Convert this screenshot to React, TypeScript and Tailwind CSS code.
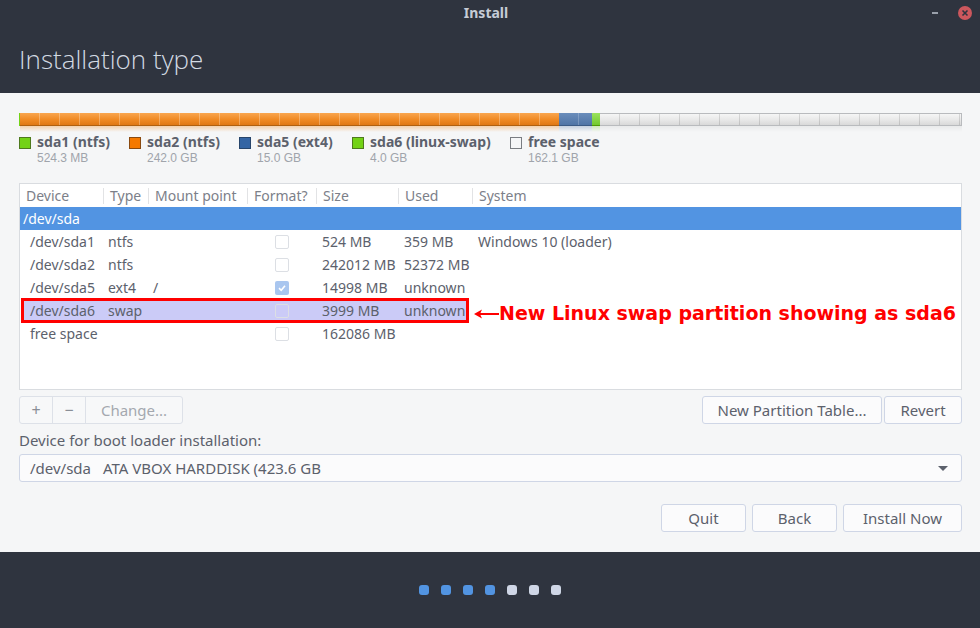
import React from "react";

type Part = {
  dev: string;
  type: string;
  mount: string;
  checked: boolean;
  size: string;
  used: string;
  sys: string;
  mark?: boolean;
};

const parts: Part[] = [
  { dev: "/dev/sda1", type: "ntfs", mount: "", checked: false, size: "524 MB", used: "359 MB", sys: "Windows 10 (loader)" },
  { dev: "/dev/sda2", type: "ntfs", mount: "", checked: false, size: "242012 MB", used: "52372 MB", sys: "" },
  { dev: "/dev/sda5", type: "ext4", mount: "/", checked: true, size: "14998 MB", used: "unknown", sys: "" },
  { dev: "/dev/sda6", type: "swap", mount: "", checked: false, size: "3999 MB", used: "unknown", sys: "", mark: true },
  { dev: "free space", type: "", mount: "", checked: false, size: "162086 MB", used: "", sys: "" },
];

const legend = [
  { label: "sda1 (ntfs)", size: "524.3 MB", box: "bg-[#73d216] border-[#4e7a1e]", w: "w-[110px]" },
  { label: "sda2 (ntfs)", size: "242.0 GB", box: "bg-[#f57900] border-[#8a4a10]", w: "w-[110px]" },
  { label: "sda5 (ext4)", size: "15.0 GB", box: "bg-[#3465a4] border-[#27456b]", w: "w-[113px]" },
  { label: "sda6 (linux-swap)", size: "4.0 GB", box: "bg-[#73d216] border-[#4e7a1e]", w: "w-[158px]" },
  { label: "free space", size: "162.1 GB", box: "bg-[#f5f6f7] border-[#7a7d82]", w: "" },
];

const headers = ["Device", "Type", "Mount point", "Format?", "Size", "Used", "System"];
const cols = "grid grid-cols-[83px_45px_99px_69px_82px_74px_1fr]";

function Check({ on }: { on: boolean }) {
  if (on)
    return (
      <span className="flex h-[14px] w-[14px] items-center justify-center rounded-[2px] bg-[#a9c6ef]">
        <svg width="10" height="10" viewBox="0 0 10 10">
          <path d="M2 5.2 L4.2 7.3 L8 2.8" fill="none" stroke="#fff" strokeWidth="1.6" />
        </svg>
      </span>
    );
  return <span className="h-[14px] w-[14px] rounded-[2px] border border-[#dcdfe4]" />;
}

function Btn({ children, className = "" }: { children: React.ReactNode; className?: string }) {
  return (
    <div
      className={
        "flex h-[28px] items-center justify-center rounded-[3px] border border-[#cfd6e6] bg-[#fbfbfc] text-[15px] text-[#5c616c] " +
        className
      }
    >
      {children}
    </div>
  );
}

export default function App() {
  return (
    <div className="flex h-[628px] w-[980px] flex-col bg-[#f5f6f7] font-['Noto_Sans',sans-serif] text-[#5c616c]">
      {/* title + header */}
      <div className="flex h-[93px] flex-col bg-[#2f343f]">
        <div className="flex h-[26px] items-center">
          <div className="flex-1" />
          <span className="text-[14px] font-bold leading-[16px] text-[#c6ccd6]">Install</span>
          <div className="flex flex-1 items-center justify-end pr-[8px]">
            <span className="mr-[20px] h-[2px] w-[6px] bg-[#9aa0ab]" />
            <span className="flex h-[14px] w-[14px] items-center justify-center rounded-full bg-[#cc575d]">
              <svg width="8" height="8" viewBox="0 0 8 8">
                <path d="M1.5 1.5 L6.5 6.5 M6.5 1.5 L1.5 6.5" stroke="#2f343f" strokeWidth="1.6" />
              </svg>
            </span>
          </div>
        </div>
        <div className="flex flex-1 items-center pl-[19px]">
          <h1 className="font-['Open_Sans',sans-serif] text-[26px] font-light text-[#d3dae3]">Installation type</h1>
        </div>
      </div>

      {/* body */}
      <div className="flex h-[459px] flex-col pl-[19px] pr-[18px] pt-[20px]">
        {/* partition bar */}
        <div className="flex h-[19px]">
          <div className="flex w-[1px] flex-col">
            <div className="h-[13px] bg-[#73d216]" />
          </div>
          <div className="flex w-[539px] flex-col">
            <div className="h-[13px] border-b border-[#b0600f] bg-[image:repeating-linear-gradient(90deg,transparent_0px,transparent_19px,rgba(255,255,255,0.28)_19px,rgba(255,255,255,0.28)_20px),linear-gradient(to_bottom,#f9a64f,#f08a24_55%,#e07815)]" />
            <div className="h-[6px] bg-[linear-gradient(to_bottom,rgba(240,138,36,0.35),rgba(240,138,36,0))]" />
          </div>
          <div className="flex w-[33px] flex-col">
            <div className="h-[13px] border-b border-[#3a5a85] bg-[image:repeating-linear-gradient(90deg,transparent_0px,transparent_19px,rgba(255,255,255,0.2)_19px,rgba(255,255,255,0.2)_20px),linear-gradient(to_bottom,#6a8dbb,#4f74a6)]" />
            <div className="h-[6px] bg-[linear-gradient(to_bottom,rgba(79,116,166,0.3),rgba(79,116,166,0))]" />
          </div>
          <div className="flex w-[8px] flex-col">
            <div className="h-[13px] border-b border-[#4e9a06] bg-[linear-gradient(to_bottom,#9be25e,#72c92e)]" />
            <div className="h-[6px] bg-[linear-gradient(to_bottom,rgba(114,201,46,0.3),rgba(114,201,46,0))]" />
          </div>
          <div className="flex flex-1 flex-col">
            <div className="h-[13px] border border-l-0 border-[#b9bbbe] bg-[image:repeating-linear-gradient(90deg,transparent_0px,transparent_19px,rgba(0,0,0,0.12)_19px,rgba(0,0,0,0.12)_20px),linear-gradient(to_bottom,#f6f6f6,#e6e6e6_60%,#d9d9d9)]" />
            <div className="h-[6px] bg-[linear-gradient(to_bottom,rgba(0,0,0,0.05),rgba(0,0,0,0))]" />
          </div>
        </div>

        {/* legend */}
        <div className="mt-[2px] flex">
          {legend.map((l) => (
            <div key={l.label} className={"flex items-start " + l.w}>
              <span className={"mt-[3px] h-[12px] w-[12px] border " + l.box} />
              <div className="ml-[6px] flex flex-col">
                <span className="text-[14px] font-bold leading-[15px] text-[#5c616c]">{l.label}</span>
                <span className="mt-[2px] font-['Liberation_Sans',sans-serif] text-[12px] leading-[14px] text-[#a0a4ab]">
                  {l.size}
                </span>
              </div>
            </div>
          ))}
        </div>

        {/* partition table */}
        <div className="mt-[18px] flex h-[207px] flex-col border border-[#d9dce0] bg-white text-[14px]">
          <div className={cols + " h-[23px] text-[#7c8089]"}>
            {headers.map((h, i) => (
              <div key={h} className={"flex items-center " + (i === 0 ? "pl-[6px]" : "")}>
                {i > 0 && <span className="h-[16px] w-px bg-[#e2e3e5]" />}
                <span className={i > 0 ? "ml-[6px]" : ""}>{h}</span>
              </div>
            ))}
          </div>
          <div className="flex h-[23px] items-center bg-[#5294e2] pl-[3px] text-white">/dev/sda</div>
          {parts.map((p) => (
            <div key={p.dev} className={cols + " relative h-[23px]"}>
              {p.mark && (
                <>
                  <div className="absolute left-[1px] top-[-1px] h-[25px] w-[448px] border-[3px] border-[#ff0000] bg-[#cbcbf7]" />
                  <div className="absolute left-[453px] top-[3px] flex h-full items-center">
                    <svg width="26" height="12" viewBox="0 0 26 12">
                      <path d="M1 6 L9 1.5 L7 6 L9 10.5 Z" fill="#ff0000" />
                      <path d="M6 6 L26 6" stroke="#ff0000" strokeWidth="2" />
                    </svg>
                    <span className="whitespace-nowrap font-['DejaVu_Sans',sans-serif] text-[19px] font-bold text-[#ff0000]">
                      New Linux swap partition showing as sda6
                    </span>
                  </div>
                </>
              )}
              <div className="relative flex items-center pl-[10px]">{p.dev}</div>
              <div className="relative flex items-center pl-[5px]">{p.type}</div>
              <div className="relative flex items-center pl-[5px]">{p.mount}</div>
              <div className="relative flex items-center justify-center">
                <Check on={p.checked} />
              </div>
              <div className="relative flex items-center pl-[6px]">{p.size}</div>
              <div className="relative flex items-center pl-[6px]">{p.used}</div>
              <div className="relative flex items-center pl-[6px]">{p.sys}</div>
            </div>
          ))}
        </div>

        {/* table buttons */}
        <div className="mt-[6px] flex">
          <div className="flex h-[28px] rounded-[3px] border border-[#dde1e8] bg-[#f7f8f9] text-[16px] text-[#8a8e96]">
            <span className="flex w-[33px] items-center justify-center border-r border-[#dde1e8]">+</span>
            <span className="flex w-[33px] items-center justify-center border-r border-[#dde1e8]">−</span>
            <span className="flex w-[96px] items-center justify-center text-[15px] text-[#a4a8af]">Change...</span>
          </div>
          <div className="flex-1" />
          <Btn className="w-[180px]">New Partition Table...</Btn>
          <Btn className="ml-[2px] w-[78px]">Revert</Btn>
        </div>

        <div className="mt-[8px] text-[15px] leading-[16px]">Device for boot loader installation:</div>

        <div className="mt-[6px] flex h-[28px] items-center rounded-[3px] border border-[#cfd6e6] bg-[#fbfbfc] pl-[10px] pr-[12px] text-[15px]">
          <span className="w-[73px]">/dev/sda</span>
          <span>ATA VBOX HARDDISK (423.6 GB</span>
          <div className="flex-1" />
          <svg width="12" height="7" viewBox="0 0 12 7">
            <path d="M1 1 L11 1 L6 6 Z" fill="#5c616c" />
          </svg>
        </div>

        <div className="mt-[22px] flex justify-end">
          <Btn className="w-[85px]">Quit</Btn>
          <Btn className="ml-[6px] w-[85px]">Back</Btn>
          <Btn className="ml-[6px] w-[119px]">Install Now</Btn>
        </div>
      </div>

      {/* footer */}
      <div className="flex flex-1 items-center justify-center gap-[12px] bg-[#2f343f]">
        {[1, 1, 1, 1, 0, 0, 0].map((d, i) => (
          <span key={i} className={"h-[10px] w-[10px] rounded-[3px] " + (d ? "bg-[#5294e2]" : "bg-[#cfd6e6]")} />
        ))}
      </div>
    </div>
  );
}
